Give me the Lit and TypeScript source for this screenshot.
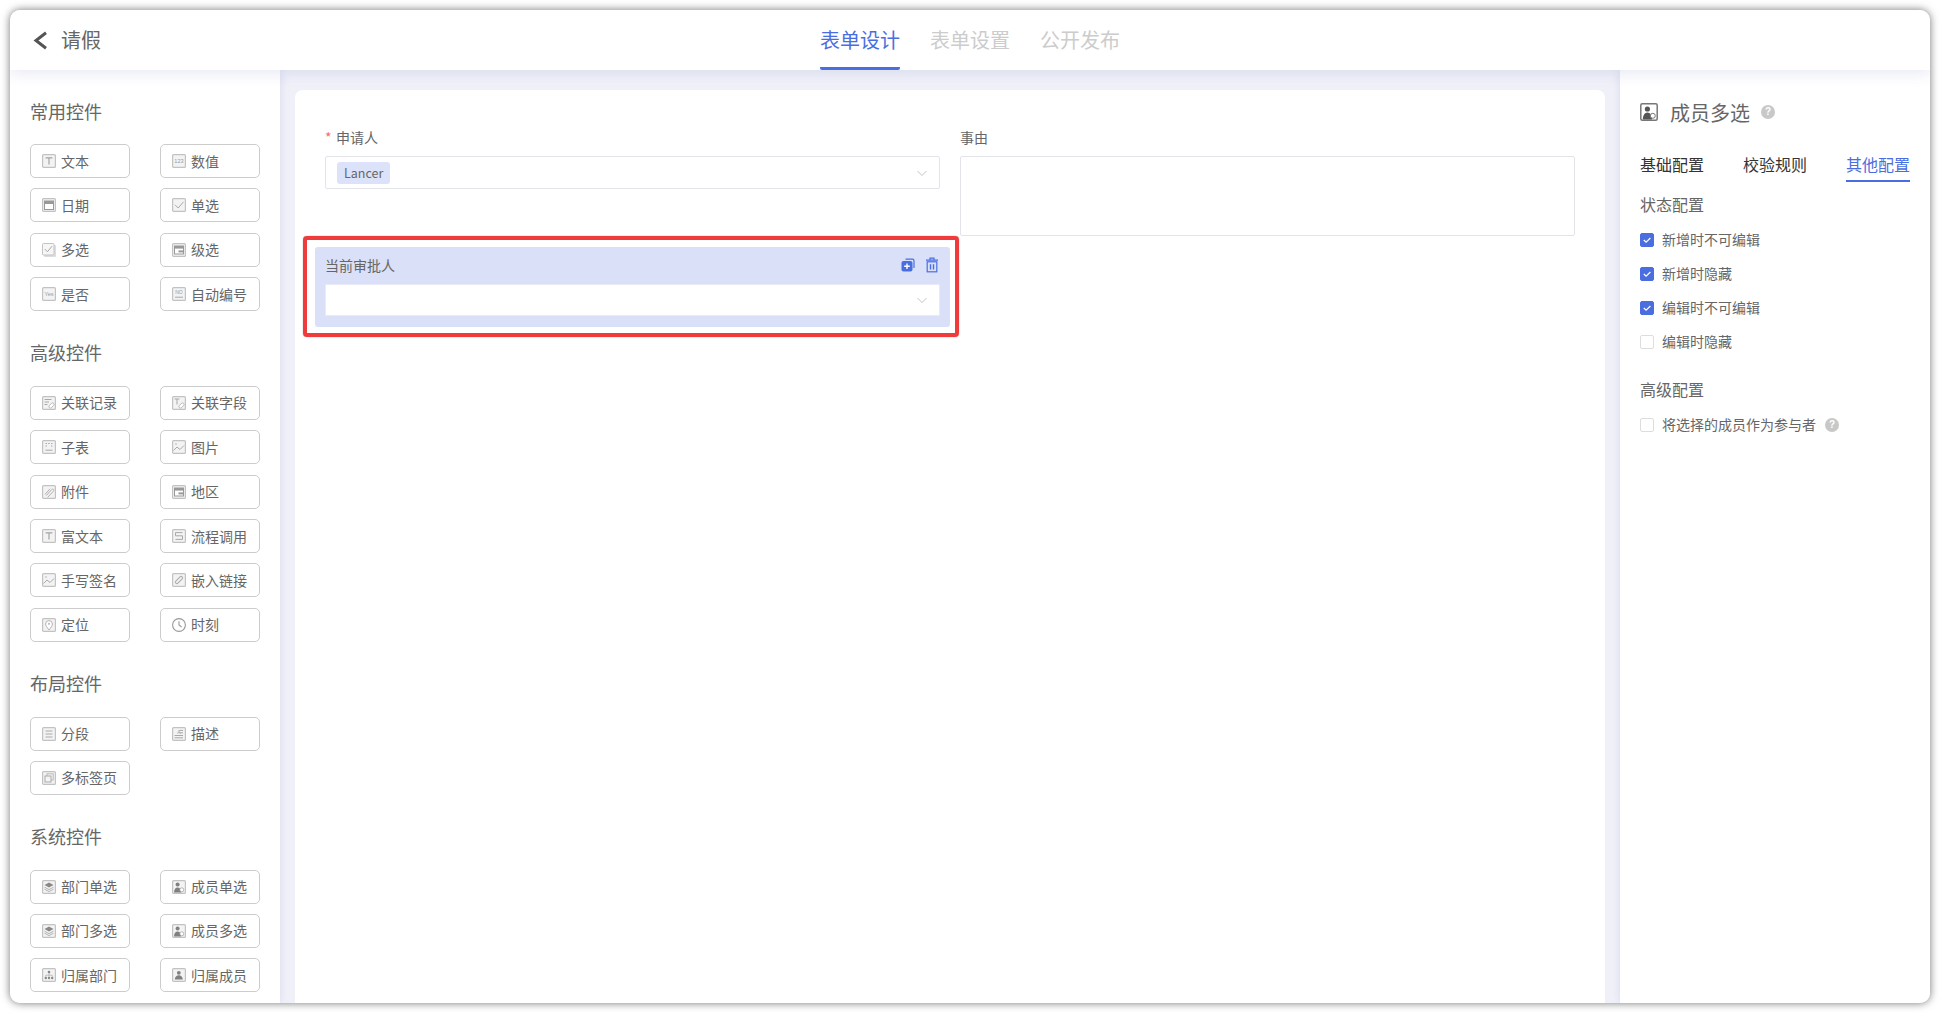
import { LitElement, html, css, svg } from "lit";
import { customElement } from "lit/decorators.js";

const frame = svg`<rect x="0.6" y="0.6" width="12.8" height="12.8" rx="1" fill="#f3f3f3" stroke="#c2c2c2" stroke-width="1.2"/>`;
const tiny = (t: string, y = 9, fs = 5.5) => svg`<text x="7" y="${y}" text-anchor="middle" font-size="${fs}" font-family="Liberation Sans, sans-serif" fill="#9a9a9a">${t}</text>`;
const link = svg`<g transform="rotate(-45 9.5 9.5)"><rect x="6.5" y="8" width="6" height="3" rx="1.5" fill="#fff" stroke="#aaa" stroke-width="0.8"/></g>`;
const stroke = (d: string, c = "#a8a8a8", w = 1) => svg`<path d="${d}" fill="none" stroke="${c}" stroke-width="${w}"/>`;

const ICONS: Record<string, unknown> = {
  text: svg`${frame}${stroke("M3.6 3.8h6.8M7 3.8v6.8", "#a4a4a4", 1.2)}`,
  num: svg`${frame}${tiny("123", 9, 5.6)}`,
  date: svg`${frame}<rect x="2.5" y="3" width="9" height="8.5" fill="#fff" stroke="#999"/><rect x="2.5" y="3" width="9" height="3" fill="#999"/>`,
  check: svg`${frame}${stroke("M3 6.8l3.2 3.2L11.5 3.8", "#aaa")}`,
  multi: svg`<rect x="2" y="2" width="12" height="12" rx="1" fill="#ddd"/><rect x="0.5" y="0.5" width="11.5" height="11.5" rx="1" fill="#f6f6f6" stroke="#c4c4c4"/>${stroke("M2.8 6l2.6 2.8L10 3.2", "#aaa")}`,
  cascade: svg`${frame}<rect x="2.5" y="3" width="9" height="8" fill="#fff" stroke="#999"/><rect x="2.5" y="3" width="9" height="2.6" fill="#999"/><rect x="6.5" y="7.4" width="5" height="2" fill="#999"/>`,
  yes: svg`${frame}${tiny("Yes", 9.2, 5.6)}`,
  no: svg`${frame}${tiny("NO", 7, 5)}${stroke("M3 10.2h8")}`,
  linkrec: svg`${frame}${stroke("M2.5 3.5h7M2.5 6h4.5M2.5 8.5h3")}${link}`,
  linkfield: svg`${frame}${stroke("M2.5 3h5M5 3v5.5")}${link}`,
  sub: svg`${frame}${stroke("M3.5 3.5h1.5M6.2 3.5h1.5M9 3.5h1.5M3.5 6h1.5M9 6h1.5M3.5 10.2h7")}`,
  image: svg`${frame}${stroke("M1.5 10.5l3.5-3.5 3 2.5 4-4", "#aaa")}<circle cx="4" cy="4" r="1" fill="#ccc"/>`,
  attach: svg`${frame}${stroke("M4.2 10.6l5.4-6c1.4-1.4 3 .2 1.7 1.7l-5.6 6M3 9.4l5-5.6", "#b0b0b0")}`,
  flow: svg`${frame}${stroke("M10.5 3.6H3.5v3.2h7v3.6H3.5")}`,
  embed: svg`${frame}<g transform="rotate(-45 7 7)"><rect x="2.5" y="5.5" width="9" height="3" rx="1.5" fill="none" stroke="#aaa"/></g>`,
  pin: svg`${frame}<path d="M7 12c-2-2.6-3.4-4.2-3.4-6a3.4 3.4 0 0 1 6.8 0c0 1.8-1.4 3.4-3.4 6z" fill="#fff" stroke="#aaa" stroke-width="0.9"/><circle cx="7" cy="5.8" r="1.1" fill="#bbb"/>`,
  clock: svg`<circle cx="7" cy="7" r="6.4" fill="#fff" stroke="#999" stroke-width="1.1"/>${stroke("M7 3.2V7l2.6 2", "#999", 1.1)}`,
  section: svg`${frame}${stroke("M3.5 4h7M3.5 7h7M3.5 10h7", "#aaa")}`,
  desc: svg`${frame}${tiny("A", 6.8, 5)}${stroke("M7.5 3.4h3.5M7.5 5.8h3.5M2.5 8.5h8.5M2.5 10.8h8.5")}`,
  tabs: svg`${frame}<rect x="5" y="2.8" width="6.2" height="6.2" fill="none" stroke="#bbb"/><rect x="3" y="5" width="6" height="6" fill="#f4f4f4" stroke="#aaa"/>`,
  dept: svg`${frame}<path d="M7 2.5l4.5 2.5L7 7.5 2.5 5z" fill="#888"/><path d="M2.5 7.2L7 9.6l4.5-2.4M2.5 9.2L7 11.6l4.5-2.4" fill="none" stroke="#aaa" stroke-width="0.9"/>`,
  member: svg`${frame}<circle cx="5.6" cy="4.4" r="2" fill="#808080"/><path d="M2 12.6c0-3.4 1.6-5.2 3.6-5.2s3.6 1.8 3.6 5.2z" fill="#808080"/><circle cx="9.8" cy="9.8" r="2" fill="#fff" stroke="#999" stroke-width="0.7"/>`,
  owndept: svg`${frame}<circle cx="7" cy="4" r="1.3" fill="#888"/><circle cx="3.8" cy="10" r="1.2" fill="#888"/><circle cx="7" cy="10" r="1.2" fill="#888"/><circle cx="10.2" cy="10" r="1.2" fill="#888"/>${stroke("M7 5v2.2M3.8 8.8V7.2h6.4v1.6M7 7.2v1.6", "#aaa", 0.7)}`,
  ownmember: svg`${frame}<circle cx="6.8" cy="4.8" r="1.9" fill="#808080"/><path d="M2.8 11.6c0-2.8 1.8-4.4 4-4.4s4 1.6 4 4.4z" fill="#808080"/>`,
};

const GROUPS: { title: string; items: [string, string][] }[] = [
  { title: "常用控件", items: [["text", "文本"], ["num", "数值"], ["date", "日期"], ["check", "单选"], ["multi", "多选"], ["cascade", "级选"], ["yes", "是否"], ["no", "自动编号"]] },
  { title: "高级控件", items: [["linkrec", "关联记录"], ["linkfield", "关联字段"], ["sub", "子表"], ["image", "图片"], ["attach", "附件"], ["cascade", "地区"], ["text", "富文本"], ["flow", "流程调用"], ["image", "手写签名"], ["embed", "嵌入链接"], ["pin", "定位"], ["clock", "时刻"]] },
  { title: "布局控件", items: [["section", "分段"], ["desc", "描述"], ["tabs", "多标签页"]] },
  { title: "系统控件", items: [["dept", "部门单选"], ["member", "成员单选"], ["dept", "部门多选"], ["member", "成员多选"], ["owndept", "归属部门"], ["ownmember", "归属成员"]] },
];

const chevron = html`<svg class="chev" width="12" height="12" viewBox="0 0 12 12"><path d="M1.5 4l4.5 4.5L10.5 4" fill="none" stroke="#c4c4c4"/></svg>`;
const help = html`<span class="help">?</span>`;

@customElement("app-root")
export class AppRoot extends LitElement {
  static styles = css`
    :host { display: block; width: 1940px; height: 1013px; padding: 10px; box-sizing: border-box; background: #fff; overflow: hidden;
      font-family: "Noto Sans CJK SC", "Noto Sans", sans-serif; color: #666; }
    * { box-sizing: border-box; }
    .window { width: 1920px; height: 993px; border-radius: 10px; background: #fff; box-shadow: 0 0 9px rgba(0,0,0,.55); display: flex; flex-direction: column; overflow: hidden; }
    .header { height: 60px; flex: none; display: grid; grid-template-columns: 1fr auto 1fr; align-items: stretch; position: relative; z-index: 2; background: #fff; box-shadow: 0 3px 14px rgba(70,80,170,.13); }
    .back { display: flex; align-items: center; padding-left: 23px; gap: 13px; font-size: 20px; color: #666; }
    .back span { position: relative; top: -1px; }
    .nav { display: flex; gap: 30px; }
    .nav span { font-size: 20px; color: #ccc; line-height: 60px; height: 60px; border-bottom: 3px solid transparent; border-radius: 0 0 2px 2px; }
    .nav span.on { color: #4a6ee0; border-bottom-color: #4a6ee0; }
    .main { flex: 1; min-height: 0; display: flex; }
    .left { width: 270px; flex: none; background: #fff; padding: 27.5px 20px 0; display: flex; flex-direction: column; gap: 28.2px; position: relative; z-index: 1; overflow: hidden; box-shadow: 0 0 9px rgba(70,80,170,.14); }
    .gtitle { font-size: 18px; line-height: 26px; color: #666; margin-bottom: 20.5px; }
    .grid { display: grid; grid-template-columns: 100px 100px; column-gap: 30px; row-gap: 10.4px; }
    .ctl { height: 34px; border: 1px solid #ccc; border-radius: 5px; display: flex; align-items: center; padding-left: 11px; gap: 5px; font-size: 14px; line-height: 20px; color: #666; }
    .ctl span { position: relative; top: -0.5px; }
    .ctl svg { flex: none; }
    .canvas { flex: 1; min-width: 0; background: #f0f1f8; padding: 20px 15px 0; }
    .card { height: 100%; background: #fff; border-radius: 8px 8px 0 0; padding: 37px 30px 0; position: relative; }
    .row { display: grid; grid-template-columns: 615px 615px; column-gap: 20px; }
    .label { font-size: 14px; line-height: 20px; color: #666; display: flex; margin-bottom: 9px; }
    .req { color: #f56c6c; width: 11px; font-size: 14px; }
    .select { height: 33px; border: 1px solid #e2e4ea; border-radius: 2px; display: flex; align-items: center; justify-content: space-between; padding: 0 11px; background: #fff; }
    .tag { height: 22px; padding: 0 7px; background: #dbe2fa; border-radius: 3px; font-size: 12.5px; line-height: 22px; color: #666; }
    .area { height: 80px; border: 1px solid #e2e4ea; border-radius: 2px; }
    .chev { margin-left: auto; }
    .picked { position: relative; width: 635px; margin: 11px 0 0 -10px; height: 80px; padding: 8px 10px 0; background: #d9e0f8; border-radius: 3px; }
    .picked .label { margin-bottom: 9px; justify-content: space-between; align-items: center; }
    .picked .select { height: 32px; border-color: #e8ebf6; border-radius: 1px; }
    .acts { display: flex; gap: 11px; align-items: center; margin-right: 2px; }
    .mark { position: absolute; left: -12px; top: -11px; width: 656px; height: 101px; border: 4px solid #ef3b3b; border-radius: 4px; box-shadow: 0 0 1px rgba(0,0,0,.6); pointer-events: none; }
    .right { width: 310px; flex: none; background: #fff; padding: 0 20px; position: relative; z-index: 1; box-shadow: 0 0 9px rgba(70,80,170,.14); }
    .rhead { height: 46px; margin-top: 19px; display: flex; align-items: center; font-size: 20px; color: #666; }
    .rhead svg { margin-right: 12px; }
    .help { width: 14px; height: 14px; border-radius: 50%; background: #c8c8c8; color: #fff; font-size: 10px; font-weight: 700; line-height: 14px; text-align: center; font-family: "Liberation Sans", sans-serif; flex: none; }
    .rhead .help { margin-left: 11px; }
    .rtabs { display: flex; justify-content: space-between; margin-top: 15px; height: 32px; }
    .rtabs span { font-size: 16px; line-height: 28px; color: #333; border-bottom: 2px solid transparent; width: 64px; height: 32px; }
    .rtabs span.on { color: #4a6ee0; border-bottom-color: #4a6ee0; }
    .sub { font-size: 16px; line-height: 24px; color: #666; margin-top: 10px; margin-bottom: 14px; }
    .sub.next { margin-top: 25px; margin-bottom: 14px; }
    .cb { display: flex; align-items: center; height: 20px; margin-bottom: 14px; font-size: 14px; color: #666; }
    .cb .txt { position: relative; top: -1px; }
    .box { width: 14px; height: 14px; border: 1px solid #ddd; border-radius: 2px; margin-right: 8px; flex: none; display: flex; }
    .box.on { background: #4a6ee0; border-color: #4a6ee0; }
    .cb .help { margin-left: 9px; }
  `;

  private icon(name: string, size = 14) {
    return html`<svg width="${size}" height="${size}" viewBox="0 0 14 14">${ICONS[name]}</svg>`;
  }

  private cb(label: string, on: boolean, tip = false) {
    return html`<div class="cb">
      <span class="box ${on ? "on" : ""}">${on ? html`<svg width="12" height="12" viewBox="0 0 12 12"><path d="M2.8 6l2.3 2.2L9.4 4" fill="none" stroke="#fff" stroke-width="1.2"/></svg>` : ""}</span>
      <span class="txt">${label}</span>${tip ? help : ""}
    </div>`;
  }

  render() {
    return html`<div class="window">
      <header class="header">
        <div class="back">
          <svg width="15" height="19" viewBox="0 0 15 19"><path d="M13 1.8L3 9.5l10 7.7" fill="none" stroke="#555" stroke-width="3"/></svg>
          <span>请假</span>
        </div>
        <nav class="nav"><span class="on">表单设计</span><span>表单设置</span><span>公开发布</span></nav>
        <div></div>
      </header>
      <div class="main">
        <aside class="left">
          ${GROUPS.map((g) => html`<section>
            <div class="gtitle">${g.title}</div>
            <div class="grid">${g.items.map(([i, t]) => html`<div class="ctl">${this.icon(i)}<span>${t}</span></div>`)}</div>
          </section>`)}
        </aside>
        <div class="canvas">
          <div class="card">
            <div class="row">
              <div>
                <div class="label"><span class="req">*</span>申请人</div>
                <div class="select"><span class="tag">Lancer</span>${chevron}</div>
              </div>
              <div>
                <div class="label">事由</div>
                <div class="area"></div>
              </div>
            </div>
            <div class="picked">
              <div class="label"><span>当前审批人</span>
                <span class="acts">
                  <svg width="14" height="14" viewBox="0 0 14 14"><path d="M4.5 1.2h7A1.5 1.5 0 0 1 13 2.7V10" fill="none" stroke="#4a6ee0" stroke-width="1.2"/><rect x="0.5" y="3" width="11" height="10.5" rx="2" fill="#4a6ee0"/><path d="M6 5.5v5.5M3.2 8.2h5.6" stroke="#fff" stroke-width="1.4"/></svg>
                  <svg width="12" height="16" viewBox="0 0 12 16"><path d="M0 3.2h12M4 3.2V1.2h4v2" fill="none" stroke="#4a6ee0" stroke-width="1.2"/><rect x="1.2" y="4.8" width="9.6" height="10" fill="none" stroke="#4a6ee0" stroke-width="1.2"/><path d="M4.5 7.2v5.2M7.5 7.2v5.2" fill="none" stroke="#4a6ee0" stroke-width="1.4"/></svg>
                </span>
              </div>
              <div class="select">${chevron}</div>
              <div class="mark"></div>
            </div>
          </div>
        </div>
        <aside class="right">
          <div class="rhead">
            <svg width="18" height="18" viewBox="0 0 18 18"><rect x="0.8" y="0.8" width="16.4" height="16.4" rx="1.5" fill="#fff" stroke="#777" stroke-width="1.5"/><circle cx="7.4" cy="6" r="2.6" fill="#555"/><path d="M2.8 16.4c0-4.2 2-7 4.6-7s4.6 2.8 4.6 7z" fill="#555"/><circle cx="12.8" cy="12.8" r="2.5" fill="#fff" stroke="#777"/></svg>
            成员多选${help}
          </div>
          <div class="rtabs"><span>基础配置</span><span>校验规则</span><span class="on">其他配置</span></div>
          <div class="sub">状态配置</div>
          ${this.cb("新增时不可编辑", true)}
          ${this.cb("新增时隐藏", true)}
          ${this.cb("编辑时不可编辑", true)}
          ${this.cb("编辑时隐藏", false)}
          <div class="sub next">高级配置</div>
          ${this.cb("将选择的成员作为参与者", false, true)}
        </aside>
      </div>
    </div>`;
  }
}
